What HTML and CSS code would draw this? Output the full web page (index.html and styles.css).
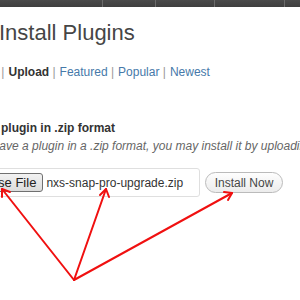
FILE: index.html
```html
<!DOCTYPE html>
<html lang="en">
<head>
    <meta charset="UTF-8">
    <meta name="viewport" content="width=device-width, initial-scale=1.0">
    <title>Install Plugins</title>
    <link rel="stylesheet" href="styles.css">
</head>
<body>
    <!-- Admin menu strip at the top -->
    <div class="admin_bar">
        <span class="menu_item" style="width: 103px;"></span>
        <span class="menu_item" style="width: 53px;"></span>
        <span class="menu_item" style="width: 59px;"></span>
        <span class="menu_item" style="width: 70px;"></span>
        <span class="menu_item"></span>
    </div>

    <!-- Page content, shifted left like the cropped screenshot -->
    <main class="wrap">
        <h2 class="page_title">Install Plugins</h2>

        <ul class="subsubsub">
            <li><a href="#">Search</a> |</li>
            <li><a href="#" class="current">Upload</a> |</li>
            <li><a href="#">Featured</a> |</li>
            <li><a href="#">Popular</a> |</li>
            <li><a href="#">Newest</a></li>
        </ul>

        <h4 class="upload_title">Install a plugin in .zip format</h4>
        <p class="install_help">If you have a plugin in a .zip format, you may install it by uploading it here.</p>

        <form class="upload_form" action="#" method="post">
            <div class="file_box">
                <button type="button" class="file_btn">Choose File</button>
                <span class="file_name">nxs-snap-pro-upgrade.zip</span>
            </div>
            <button type="submit" class="install_btn">Install Now</button>
        </form>
    </main>

    <!-- Red annotation arrows drawn over the page -->
    <svg class="arrows" width="300" height="300" viewBox="0 0 300 300">
        <g stroke="#f01010" stroke-width="2" fill="none" stroke-linecap="round" stroke-linejoin="round">
            <path d="M74 280 L2 189"/>
            <path d="M2 197 L2 189 L10 192"/>
            <path d="M74 280 L106 189"/>
            <path d="M100 195 L106 189 L109 197"/>
            <path d="M74 280 L232 193"/>
            <path d="M224 192 L232 193 L228 200"/>
        </g>
    </svg>
</body>
</html>
```

FILE: styles.css
```css
/* Page base */
body {
    margin: 0;
    background-color: #fff;
    font-family: "Liberation Sans", Arial, sans-serif;
    overflow: hidden;
    position: relative;
    width: 300px;
    height: 300px;
}
/* Dark admin menu strip */
.admin_bar {
    display: flex;
    height: 7px;
    background: linear-gradient(#4a4a4a, #3e3e3e);
}
.menu_item {
    flex: none;
    height: 100%;
    border-right: 1px solid #6a6a6a;
    box-sizing: border-box;
}
.menu_item:last-child {
    flex: 1;
    border-right: none;
}
/* Content column (left part is cut off in the screenshot) */
.wrap {
    margin-left: -40px;
}
.page_title {
    margin: 10px 0 0 0;
    padding-left: 39px;
    font-size: 22px;
    font-weight: normal;
    line-height: 32px;
    color: #464646;
}
/* Tabs row */
.subsubsub {
    list-style: none;
    margin: 15px 0 0 0;
    padding: 0;
    display: flex;
    gap: 4px;
    font-size: 12px;
    line-height: 16px;
    color: #999;
}
.subsubsub a {
    color: #4679a9;
    text-decoration: none;
}
.subsubsub a.current {
    color: #333;
    font-weight: bold;
}
/* Upload section */
.upload_title {
    margin: 40px 0 0 -7px;
    font-size: 12px;
    line-height: 16px;
    color: #333;
}
.install_help {
    margin: 2px 0 0 0;
    font-size: 12px;
    line-height: 16px;
    font-style: italic;
    color: #666;
    white-space: nowrap;
}
.upload_form {
    display: flex;
    align-items: center;
    gap: 5px;
    margin-top: 14px;
}
.file_box {
    display: flex;
    align-items: center;
    gap: 3px;
    width: 240px;
    height: 29px;
    padding: 0 4px 0 0;
    box-sizing: border-box;
    border: 1px solid #dfdfdf;
    border-radius: 3px;
}
.file_btn {
    height: 19px;
    padding: 0 6px 0 5px;
    border: 1px solid #707070;
    border-radius: 3px;
    background: linear-gradient(#f2f2f2, #dcdcdc);
    font-family: inherit;
    font-size: 13px;
    color: #222;
}
.file_name {
    font-size: 12px;
    color: #333;
}
/* Pill shaped submit button */
.install_btn {
    width: 78px;
    height: 21px;
    padding: 0;
    border: 1px solid #bbb;
    border-radius: 11px;
    background: linear-gradient(#fefefe, #ececec);
    font-family: inherit;
    font-size: 12px;
    color: #464646;
}
/* Annotation overlay */
.arrows {
    position: absolute;
    left: 0;
    top: 0;
}
```
